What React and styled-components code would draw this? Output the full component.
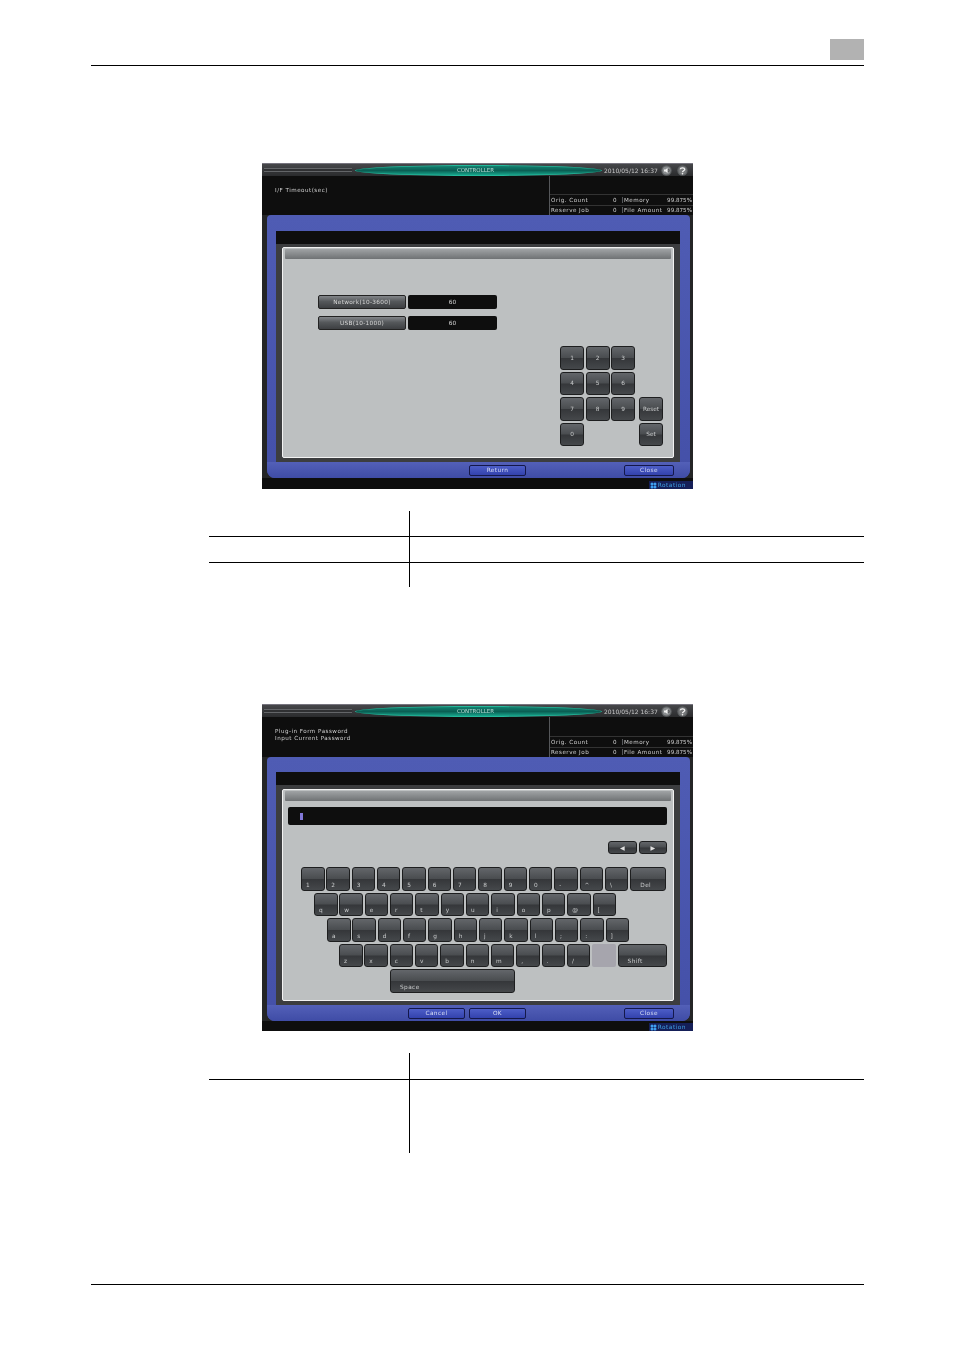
import React from "react";
import styled, { createGlobalStyle } from "styled-components";

const GlobalStyle = createGlobalStyle`
  html, body {
    margin: 0;
    padding: 0;
    background: #fff;
  }
`;

const padKeys = [
  { label: "1", col: 1, row: 1 },
  { label: "2", col: 2, row: 1 },
  { label: "3", col: 3, row: 1 },
  { label: "4", col: 1, row: 2 },
  { label: "5", col: 2, row: 2 },
  { label: "6", col: 3, row: 2 },
  { label: "7", col: 1, row: 3 },
  { label: "8", col: 2, row: 3 },
  { label: "9", col: 3, row: 3 },
  { label: "Reset", col: 5, row: 3 },
  { label: "0", col: 1, row: 4 },
  { label: "Set", col: 5, row: 4 },
];
const row1 = ["1", "2", "3", "4", "5", "6", "7", "8", "9", "0", "-", "^", "\\"];
const row2 = ["q", "w", "e", "r", "t", "y", "u", "i", "o", "p", "@", "["];
const row3 = ["a", "s", "d", "f", "g", "h", "j", "k", "l", ";", ":", "]"];
const row4 = ["z", "x", "c", "v", "b", "n", "m", ",", ".", "/"];

const SpeakerIcon = () => (
  <svg width="11" height="11" viewBox="0 0 22 22">
    <circle cx="11" cy="11" r="10.5" fill="#5c5f61" />
    <circle cx="11" cy="11" r="8" fill="#8a8d8f" />
    <path d="M6 9h3l4-3v10l-4-3H6z" fill="#f0f0f0" />
    <path d="M15 8c1.5 2 1.5 4 0 6" stroke="#2a2a2a" strokeWidth="1.5" fill="none" />
  </svg>
);

const HelpIcon = () => (
  <svg width="11" height="11" viewBox="0 0 22 22">
    <circle cx="11" cy="11" r="10.5" fill="#5c5f61" />
    <circle cx="11" cy="11" r="8" fill="#77797b" />
    <path d="M6.5 8.5C7 5 15 5 15.5 8.5c0 3-4.5 3-4.5 6" stroke="#f4f4f4" strokeWidth="2.6" fill="none" />
    <circle cx="11" cy="17.5" r="1.6" fill="#f4f4f4" />
  </svg>
);

const RotationIcon = () => (
  <svg width="7" height="7" viewBox="0 0 14 14">
    <circle cx="4" cy="4" r="3" fill="#3fa0f0" />
    <circle cx="10" cy="4" r="3" fill="#3fa0f0" />
    <circle cx="4" cy="10" r="3" fill="#3fa0f0" />
    <circle cx="10" cy="10" r="3" fill="#3fa0f0" />
  </svg>
);

const Screen = ({ message, infoHeight, blueTop, bottom, gap, panelHeight, footer, children }) => (
  <ScreenWrap>
    <TitleBar>
      <Stripes />
      <Pill>CONTROLLER</Pill>
      <DateText>2010/05/12 16:37</DateText>
      <TitleIcons>
        <SpeakerIcon />
        <HelpIcon />
      </TitleIcons>
    </TitleBar>
    <InfoRow $height={infoHeight}>
      <Message>
        {message.map((line) => (
          <div key={line}>{line}</div>
        ))}
      </Message>
      <Stats>
        <StatRow>
          <StatLabel>Orig. Count</StatLabel>
          <StatCount>0</StatCount>
          <StatName>Memory</StatName>
          <StatValue>99.875%</StatValue>
        </StatRow>
        <StatRow>
          <StatLabel>Reserve Job</StatLabel>
          <StatCount>0</StatCount>
          <StatName>File Amount</StatName>
          <StatValue>99.875%</StatValue>
        </StatRow>
      </Stats>
    </InfoRow>
    <BluePanel>
      <BlueTop $height={blueTop} />
      <Frame>
        <BlackBar />
        <FrameGap $height={gap} />
        <GrayPanel $height={panelHeight}>
          <PanelHeader />
          {children}
        </GrayPanel>
        <FrameGap $height={4} />
      </Frame>
      <Footer>{footer}</Footer>
    </BluePanel>
    <BottomStrip $height={bottom}>
      <Rotation>
        <RotationIcon />
        Rotation
      </Rotation>
    </BottomStrip>
  </ScreenWrap>
);

export default function App() {
  return (
    <Page>
      <GlobalStyle />
      <HeaderArea>
        <ChapterBox />
      </HeaderArea>

      <FirstScreen>
        <Screen
          message={["I/F Timeout(sec)"]}
          infoHeight={39}
          blueTop={16}
          gap={3}
          panelHeight={211}
          bottom={11}
          footer={
            <>
              <FooterButton $left={469 - 267}>Return</FooterButton>
              <CloseButton>Close</CloseButton>
            </>
          }
        >
          <FormArea>
            <FormRow>
              <WideButton>Network(10-3600)</WideButton>
              <ValueBox>60</ValueBox>
            </FormRow>
            <FormRow>
              <WideButton>USB(10-1000)</WideButton>
              <ValueBox>60</ValueBox>
            </FormRow>
          </FormArea>
          <Keypad>
            {padKeys.map((k) => (
              <PadKey key={k.label} $col={k.col} $row={k.row}>
                {k.label}
              </PadKey>
            ))}
          </Keypad>
        </Screen>
      </FirstScreen>

      <TableOne>
        <TableRow $height={25}>
          <TableLeft />
          <TableRight />
        </TableRow>
        <TableRow $height={25} $line>
          <TableLeft />
          <TableRight />
        </TableRow>
        <TableRow $height={24} $line>
          <TableLeft />
          <TableRight />
        </TableRow>
      </TableOne>

      <SecondScreen>
        <Screen
          message={["Plug-in Form Password", "Input Current Password"]}
          infoHeight={40}
          blueTop={15}
          gap={4}
          panelHeight={212}
          bottom={10}
          footer={
            <>
              <FooterButton $left={408 - 267}>Cancel</FooterButton>
              <FooterButton $left={4}>OK</FooterButton>
              <CloseButton>Close</CloseButton>
            </>
          }
        >
          <InputBox>
            <Cursor />
          </InputBox>
          <ArrowRow>
            <ArrowKey>◀</ArrowKey>
            <ArrowKey>▶</ArrowKey>
          </ArrowRow>
          <Keyboard>
            <KeyRow $left={19}>
              {row1.map((k) => (
                <BoardKey key={k}>{k}</BoardKey>
              ))}
              <BoardKey $width={36}>Del</BoardKey>
            </KeyRow>
            <KeyRow $left={32}>
              {row2.map((k) => (
                <BoardKey key={k}>{k}</BoardKey>
              ))}
            </KeyRow>
            <KeyRow $left={45}>
              {row3.map((k) => (
                <BoardKey key={k}>{k}</BoardKey>
              ))}
            </KeyRow>
            <KeyRow $left={57}>
              {row4.map((k) => (
                <BoardKey key={k}>{k}</BoardKey>
              ))}
              <BlankKey />
              <BoardKey $width={49}>Shift</BoardKey>
            </KeyRow>
            <KeyRow $left={108}>
              <BoardKey $width={125}>Space</BoardKey>
            </KeyRow>
          </Keyboard>
        </Screen>
      </SecondScreen>

      <TableTwo>
        <TableRow $height={26}>
          <TableLeft />
          <TableRight />
        </TableRow>
        <TableRow $height={73} $line>
          <TableLeft />
          <TableRight />
        </TableRow>
      </TableTwo>

      <BottomRule />
    </Page>
  );
}

const Page = styled.div`
  width: 954px;
  height: 1350px;
  padding: 39px 90px 0 91px;
  box-sizing: border-box;
  overflow: hidden;
  font-family: "Liberation Sans", Arial, sans-serif;
`;
const HeaderArea = styled.div`
  display: flex;
  justify-content: flex-end;
  height: 26px;
  border-bottom: 1px solid #000;
`;
const ChapterBox = styled.div`
  width: 34px;
  height: 21px;
  background: #b2b2b2;
`;
const FirstScreen = styled.div`
  margin: 97px 0 0 171px;
`;
const SecondScreen = styled.div`
  margin: 117px 0 0 171px;
`;
const ScreenWrap = styled.div`
  width: 431px;
  background: #242526;
  filter: blur(0.35px);
`;
const TitleBar = styled.div`
  display: flex;
  align-items: center;
  box-sizing: border-box;
  height: 13px;
  border-top: 1px solid #77757f;
  background: linear-gradient(#46474a, #2a2b2d);
`;
const Stripes = styled.div`
  width: 88px;
  height: 5px;
  margin: 0 3px 0 2px;
  background: repeating-linear-gradient(#636568 0 1px, #2f3032 1px 3px);
`;
const Pill = styled.div`
  box-sizing: border-box;
  width: 247px;
  height: 11px;
  line-height: 9px;
  padding-right: 6px;
  border: 1px solid #23b99b;
  border-radius: 50%;
  background: linear-gradient(#12806f, #0a5f54 50%, #17a48b);
  color: #b9ddd6;
  font-family: "DejaVu Sans", sans-serif;
  font-size: 5.5px;
  text-align: center;
`;
const DateText = styled.div`
  margin-left: 2px;
  color: #c9c9c9;
  font-family: "DejaVu Sans", sans-serif;
  font-size: 6px;
  white-space: nowrap;
`;
const TitleIcons = styled.div`
  display: flex;
  gap: 5px;
  margin-left: 3px;
`;
const InfoRow = styled.div`
  display: flex;
  height: ${(p) => p.$height}px;
  background: #0e0e0e;
  color: #d2d2d2;
  font-family: "DejaVu Sans", sans-serif;
  font-size: 5.6px;
  letter-spacing: 0.48px;
`;
const Message = styled.div`
  flex: 1;
  padding: 10.5px 0 0 13px;
  line-height: 7px;
`;
const Stats = styled.div`
  display: flex;
  flex-direction: column;
  justify-content: flex-end;
  width: 143px;
  border-left: 1px solid #55575a;
`;
const StatRow = styled.div`
  display: flex;
  align-items: center;
  height: 9.5px;
  border-top: 1px solid #333;
  padding: 0 1px;
  white-space: nowrap;
`;
const StatLabel = styled.span`
  width: 54px;
`;
const StatCount = styled.span`
  width: 12px;
  text-align: right;
`;
const StatName = styled.span`
  width: 43px;
  margin-left: 5px;
  padding-left: 1px;
  border-left: 1px solid #55575a;
`;
const StatValue = styled.span`
  flex: 1;
  letter-spacing: 0;
  text-align: right;
`;
const BluePanel = styled.div`
  margin: 0 3px 0 5px;
  background: linear-gradient(#4f5cb4, #4450a8);
  border-radius: 4px 4px 8px 8px;
  padding: 0 10px;
`;
const BlueTop = styled.div`
  height: ${(p) => p.$height}px;
`;
const Frame = styled.div`
  background: #3c3d3f;
  padding: 0 6px;
  margin-left: -1px;
`;
const BlackBar = styled.div`
  height: 13px;
  margin: 0 -6px;
  background: #0e0e0e;
`;
const FrameGap = styled.div`
  height: ${(p) => p.$height}px;
`;
const GrayPanel = styled.div`
  box-sizing: border-box;
  height: ${(p) => p.$height}px;
  padding: 1px;
  background: #bdc0c1;
  border: 1px solid #f2f2f2;
  border-radius: 2px;
`;
const PanelHeader = styled.div`
  height: 10px;
  margin: 0 1px;
  background: linear-gradient(#a0a3a5, #6f7274);
  border-radius: 1px;
`;
const Footer = styled.div`
  display: flex;
  align-items: flex-start;
  box-sizing: border-box;
  height: 16px;
  margin: 0 -10px;
  padding: 3px 16px 0 0;
  border-radius: 0 0 8px 8px;
  background: linear-gradient(#5360b8, #3f4ca6);
`;
const FooterButton = styled.div`
  box-sizing: border-box;
  width: 57px;
  height: 11px;
  line-height: 9px;
  margin-left: ${(p) => p.$left}px;
  border: 1px solid #14184a;
  border-radius: 2px;
  background: linear-gradient(#4d5ec8, #3342ad);
  color: #d8def5;
  font-family: "DejaVu Sans", sans-serif;
  font-size: 5.8px;
  letter-spacing: 0.4px;
  text-align: center;
`;
const CloseButton = styled(FooterButton)`
  width: 50px;
  margin-left: auto;
`;
const BottomStrip = styled.div`
  display: flex;
  justify-content: flex-end;
  height: ${(p) => p.$height}px;
  background: #0e0e0e;
`;
const Rotation = styled.div`
  display: flex;
  align-items: center;
  gap: 1px;
  align-self: flex-end;
  height: 8px;
  padding: 0 7px 0 1px;
  background: #151f58;
  color: #3f9fe0;
  font-family: "DejaVu Sans", sans-serif;
  font-size: 5.8px;
  letter-spacing: 0.5px;
`;
const FormArea = styled.div`
  display: flex;
  flex-direction: column;
  gap: 7px;
  margin: 36px 0 0 34px;
`;
const FormRow = styled.div`
  display: flex;
  gap: 2px;
  height: 14px;
`;
const WideButton = styled.div`
  box-sizing: border-box;
  width: 88px;
  line-height: 12px;
  border: 1px solid #222;
  border-radius: 2px;
  background: linear-gradient(#83868a, #55585b 45%, #3d3f42);
  color: #d5d5d5;
  font-family: "DejaVu Sans", sans-serif;
  font-size: 5.8px;
  letter-spacing: 0.3px;
  text-align: center;
`;
const ValueBox = styled.div`
  width: 89px;
  line-height: 14px;
  border-radius: 2px;
  background: #0e0e0e;
  color: #d5d5d5;
  font-family: "DejaVu Sans", sans-serif;
  font-size: 5.8px;
  text-align: center;
`;
const Keypad = styled.div`
  display: grid;
  grid-template-columns: 24px 24px 24px 1px 24px;
  grid-auto-rows: 23.5px;
  gap: 2px 1.5px;
  justify-content: end;
  margin: 16px 9px 0 0;
`;
const KeyFace = styled.div`
  box-sizing: border-box;
  border: 1px solid #1d1e1f;
  border-radius: 3px;
  background: linear-gradient(#63666a, #4a4d50 48%, #35373a 52%, #45484b);
  color: #c9cbcc;
  font-family: "DejaVu Sans", sans-serif;
  font-size: 5.8px;
`;
const PadKey = styled(KeyFace)`
  grid-column: ${(p) => p.$col};
  grid-row: ${(p) => p.$row};
  display: flex;
  align-items: center;
  justify-content: center;
`;
const InputBox = styled.div`
  display: flex;
  align-items: center;
  height: 18px;
  margin: 6px 5px 0 4px;
  padding-left: 12px;
  border-radius: 2px;
  background: #0e0e0e;
`;
const Cursor = styled.div`
  width: 3px;
  height: 7px;
  background: #8278d8;
`;
const ArrowRow = styled.div`
  display: flex;
  justify-content: flex-end;
  gap: 2px;
  margin: 16px 5px 0 0;
`;
const ArrowKey = styled(KeyFace)`
  width: 28.5px;
  height: 13px;
  line-height: 11px;
  text-align: center;
  color: #e0e0e0;
  font-size: 6px;
`;
const Keyboard = styled.div`
  display: flex;
  flex-direction: column;
  gap: 2px;
  margin-top: 13px;
`;
const KeyRow = styled.div`
  display: flex;
  gap: 1.83px;
  height: 23.5px;
  padding-left: ${(p) => p.$left - 2}px;
`;
const BoardKey = styled(KeyFace)`
  display: flex;
  align-items: flex-end;
  width: ${(p) => p.$width || 23.5}px;
  padding: 0 0 2px ${(p) => (p.$width ? 9 : 4)}px;
  letter-spacing: 0.4px;
`;
const BlankKey = styled.div`
  width: 23.5px;
  border-radius: 2px;
  background: #a6a5ad;
`;
const TableOne = styled.div`
  margin: 22px 0 0 118px;
`;
const TableTwo = styled.div`
  margin: 22px 0 0 118px;
`;
const TableRow = styled.div`
  display: flex;
  height: ${(p) => p.$height}px;
  border-top: ${(p) => (p.$line ? "1px solid #000" : "none")};
`;
const TableLeft = styled.div`
  width: 200px;
  border-right: 1px solid #000;
`;
const TableRight = styled.div`
  flex: 1;
`;
const BottomRule = styled.div`
  margin-top: 131px;
  border-top: 1px solid #000;
`;
